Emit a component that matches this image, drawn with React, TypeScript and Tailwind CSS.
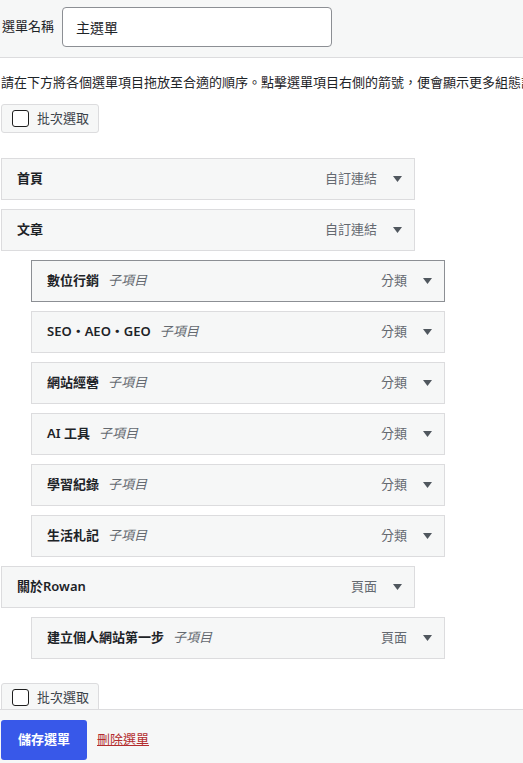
import React from 'react';

type MenuItem = {
  title: string;
  type: string;
  child?: boolean;
  active?: boolean;
};

const items: MenuItem[] = [
  { title: '首頁', type: '自訂連結' },
  { title: '文章', type: '自訂連結' },
  { title: '數位行銷', type: '分類', child: true, active: true },
  { title: 'SEO・AEO・GEO', type: '分類', child: true },
  { title: '網站經營', type: '分類', child: true },
  { title: 'AI 工具', type: '分類', child: true },
  { title: '學習紀錄', type: '分類', child: true },
  { title: '生活札記', type: '分類', child: true },
  { title: '關於Rowan', type: '頁面' },
  { title: '建立個人網站第一步', type: '頁面', child: true },
];

function Arrow() {
  return (
    <svg width="9" height="6" viewBox="0 0 9 6" className="shrink-0">
      <polygon points="0,0 9,0 4.5,6" fill="#50575e" />
    </svg>
  );
}

function BulkSelect() {
  return (
    <button className="flex h-[29px] w-[98px] items-center gap-[8px] rounded-[3px] border border-[#dcdcde] bg-[#f6f7f7] pl-[10px] text-[13px] text-[#3c434a]">
      <span className="h-[17px] w-[17px] rounded-[3px] border-[1.5px] border-[#1e1e1e] bg-white" />
      批次選取
    </button>
  );
}

function Row({ item }: { item: MenuItem }) {
  const border = item.active ? 'border-[#8c8f94]' : 'border-[#dcdcde]';
  return (
    <div
      className={`mb-[9px] flex h-[42px] w-[414px] items-center border ${border} bg-[#f6f7f7] pl-[15px] pr-[12px] ${item.child ? 'ml-[30px]' : ''}`}
    >
      <span className="text-[13px] font-semibold text-[#1d2327]">{item.title}</span>
      {item.child && <span className="ml-[9px] text-[13px] italic text-[#646970]">子項目</span>}
      <span className="ml-auto mr-[16px] text-[13px] text-[#646970]">{item.type}</span>
      <Arrow />
    </div>
  );
}

export default function App() {
  return (
    <div
      className="flex h-[763px] w-[523px] flex-col overflow-hidden bg-white"
      style={{ fontFamily: '"Noto Sans", "Noto Sans CJK TC", sans-serif' }}
    >
      <div className="h-[709px] shrink-0 overflow-hidden">
        {/* Header */}
        <div className="flex h-[58px] items-start border-b border-[#dcdcde] bg-[#f6f7f7] pl-[2px] pt-[7px]">
          <label className="mr-[8px] mt-[10px] text-[13px] text-[#1d2327]">選單名稱</label>
          <input
            defaultValue="主選單"
            className="h-[40px] w-[270px] rounded-[4px] border border-[#8c8f94] bg-white px-[13px] text-[14px] text-[#1d2327] outline-none"
          />
        </div>

        <div className="pl-px">
          <p className="mt-[14px] overflow-hidden whitespace-nowrap text-[13px] leading-[20px] text-[#1d2327]">
            請在下方將各個選單項目拖放至合適的順序。點擊選單項目右側的箭號，便會顯示更多組態設定選項。
          </p>

          <div className="mt-[12px]">
            <BulkSelect />
          </div>

          <div className="mt-[25px]">
            {items.map((it) => (
              <Row key={it.title} item={it} />
            ))}
          </div>

          <div className="mt-[24px]">
            <BulkSelect />
          </div>
        </div>
      </div>

      {/* Footer */}
      <div className="flex flex-1 items-start gap-[10px] border-t border-[#dcdcde] bg-[#f6f7f7] pl-px pt-[10px]">
        <button className="h-[40px] w-[86px] rounded-[3px] bg-[#3858e9] text-[13px] font-semibold text-white">
          儲存選單
        </button>
        <a href="#" className="mt-[10px] text-[13px] text-[#b32d2e] underline">
          刪除選單
        </a>
      </div>
    </div>
  );
}
